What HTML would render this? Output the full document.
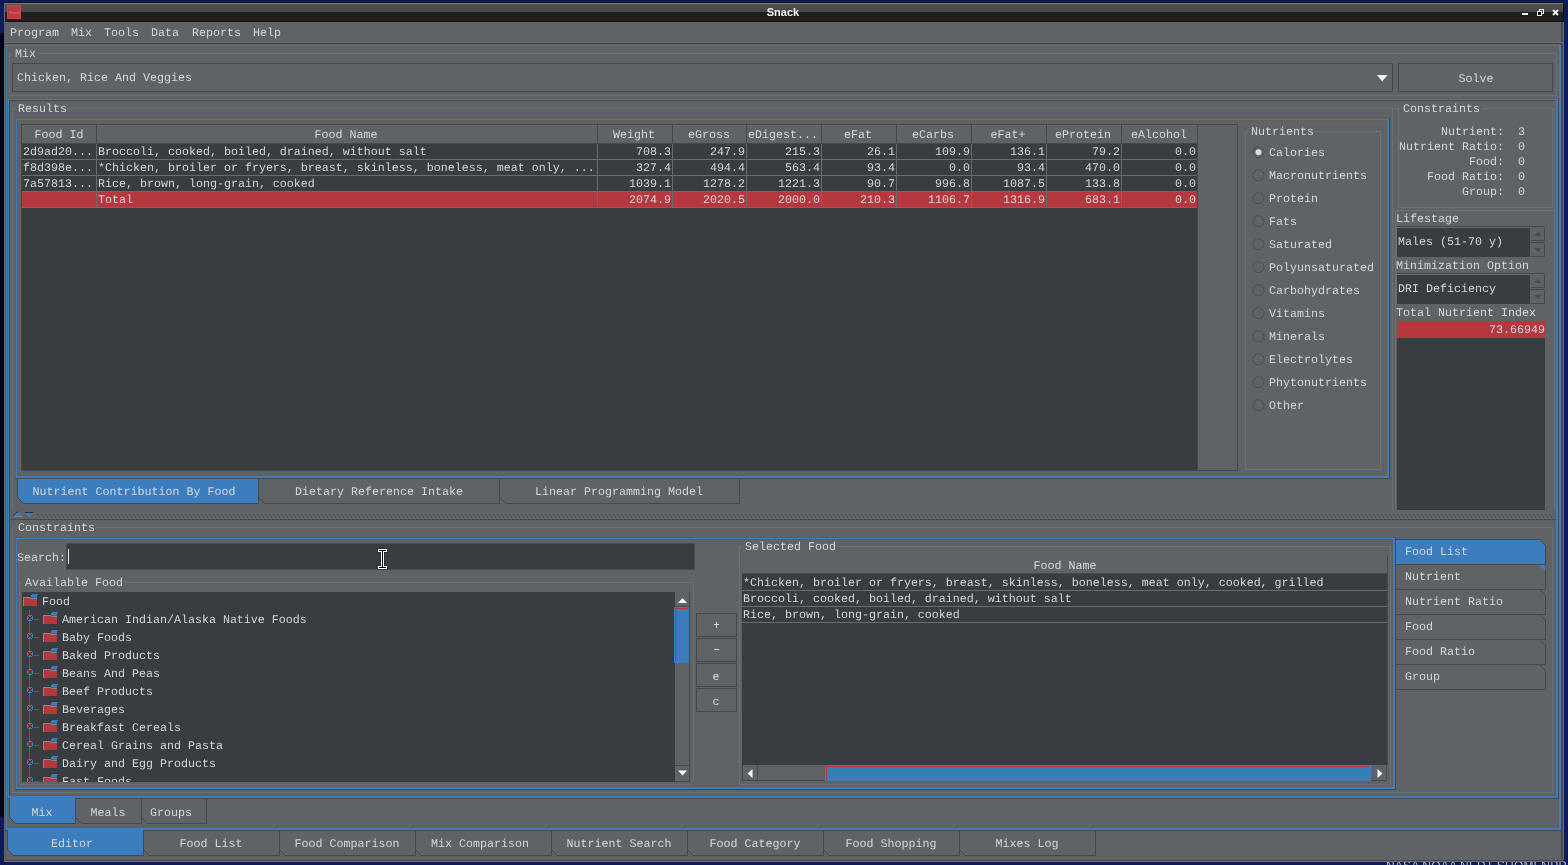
<!DOCTYPE html>
<html><head><meta charset="utf-8"><title>Snack</title><style>
*{margin:0;padding:0;box-sizing:content-box}
html,body{width:1568px;height:865px;overflow:hidden;background:#0c1c58}
#root{position:absolute;left:0;top:0;width:1568px;height:865px;overflow:hidden;will-change:transform;background:#0c1c58}
#root div,#root svg{position:absolute}
.t{font-family:"Liberation Mono",monospace;font-size:11.67px;line-height:14px;white-space:pre;height:14px;text-rendering:geometricPrecision}
</style></head><body><div id="root">
<div style="left:0px;top:0px;width:1568px;height:865px;background:#0c1c58;"></div>
<div style="left:0px;top:33px;width:4px;height:784px;background:#02031c;"></div>
<div style="left:1386px;top:858px;font-family:'Liberation Sans',sans-serif;font-size:12px;line-height:16px;color:#b8bccc;letter-spacing:0.2px;white-space:pre">NASA NOAA NEDT SUOMI-NPP</div>
<div style="left:4px;top:2px;width:1560px;height:860px;background:#121212;"></div>
<div style="left:4px;top:3px;width:1559px;height:1px;background:#7c7c7c;"></div>
<div style="left:4px;top:4px;width:1559px;height:8px;background:linear-gradient(#505050,#464646);"></div>
<div style="left:4px;top:12px;width:1559px;height:9px;background:#1f1f1f;"></div>
<div style="left:4px;top:21px;width:1559px;height:1px;background:#151515;"></div>
<div style="left:4px;top:3px;width:1px;height:19px;background:#6a6a6a;"></div>
<div style="left:7px;top:5px;width:14px;height:14px;background:#bc3b43;box-shadow:inset 0 0 0 1px #cf444c"></div>
<div style="left:9px;top:10px;width:24px;height:10px;transform:scale(0.5);transform-origin:0 0;font-family:'Liberation Sans',sans-serif;font-size:8px;line-height:10px;color:#d07a80">Snack</div>
<div style="left:683px;top:5px;width:200px;text-align:center;font-family:'Liberation Sans',sans-serif;font-weight:bold;font-size:11px;line-height:14px;color:#f4f4f4">Snack</div>
<div style="left:1522px;top:13px;width:6px;height:2px;background:#f2f2f2;"></div>
<svg style="left:1537px;top:9px" width="7" height="7" shape-rendering="crispEdges"><path d="M2.5 2V0.5H6.5V4.5H5" fill="none" stroke="#f2f2f2" stroke-width="1"/><rect x="0.5" y="2.5" width="4" height="4" fill="#000" stroke="#f2f2f2" stroke-width="1"/></svg>
<svg style="left:1552px;top:9px" width="7" height="7"><path d="M1 1L6 6M6 1L1 6" stroke="#f2f2f2" stroke-width="2"/></svg>
<div style="left:4px;top:22px;width:1559px;height:839px;background:#5f6366;"></div>
<div style="left:5px;top:22px;width:1px;height:838px;background:#5e5b59;"></div>
<div style="left:1561px;top:22px;width:1px;height:838px;background:#46494b;"></div>
<div style="left:1562px;top:22px;width:1px;height:838px;background:#46494b;"></div>
<div style="left:1563px;top:22px;width:1px;height:838px;background:#6a6d70;"></div>
<div style="left:6px;top:860px;width:1556px;height:1px;background:#46494b;"></div>
<div style="left:4px;top:861px;width:1560px;height:1px;background:#707272;"></div>
<div style="left:4px;top:22px;width:1px;height:840px;background:#63605e;"></div>
<div style="left:4px;top:42px;width:1559px;height:1px;background:#6b6f72;"></div>
<div style="left:4px;top:43px;width:1559px;height:1px;background:#45474a;"></div>
<div style="left:4px;top:44px;width:1559px;height:1px;background:#4f5153;"></div>
<div class="t" style="left:10px;top:26px;color:#d2d7dd;">Program</div>
<div class="t" style="left:71px;top:26px;color:#d2d7dd;">Mix</div>
<div class="t" style="left:104px;top:26px;color:#d2d7dd;">Tools</div>
<div class="t" style="left:151px;top:26px;color:#d2d7dd;">Data</div>
<div class="t" style="left:192px;top:26px;color:#d2d7dd;">Reports</div>
<div class="t" style="left:253px;top:26px;color:#d2d7dd;">Help</div>
<div style="left:5px;top:44px;width:1556px;height:1px;background:#625e5c;"></div>
<div style="left:5px;top:44px;width:1px;height:786px;background:#625e5c;"></div>
<div style="left:5px;top:830px;width:1557px;height:1px;background:#46494b;"></div>
<div style="left:1561px;top:44px;width:1px;height:787px;background:#46494b;"></div>
<div style="left:6px;top:45px;width:1555px;height:1px;background:#3b7dbd;"></div>
<div style="left:6px;top:45px;width:1px;height:785px;background:#3b7dbd;"></div>
<div style="left:6px;top:828px;width:1555px;height:2px;background:#3b7dbd;"></div>
<div style="left:1559px;top:45px;width:2px;height:785px;background:#3b7dbd;"></div>
<div style="left:7px;top:46px;width:1552px;height:1px;background:#625e5c;"></div>
<div style="left:7px;top:46px;width:1px;height:782px;background:#625e5c;"></div>
<div style="left:7px;top:827px;width:1552px;height:1px;background:#625e5c;"></div>
<div style="left:1558px;top:46px;width:1px;height:782px;background:#625e5c;"></div>
<div style="left:9px;top:53px;width:1546px;height:41px;border:1px solid #6c7075;"></div>
<div style="left:12px;top:52px;width:26px;height:3px;background:#5f6366;"></div>
<div class="t" style="left:15px;top:47px;color:#d2d7dd;">Mix</div>
<div style="left:12px;top:63px;width:1379px;height:27px;border:1px solid #46494b;"></div>
<div class="t" style="left:17px;top:71px;color:#d2d7dd;">Chicken, Rice And Veggies</div>
<svg style="left:1377px;top:75px" width="11" height="7"><polygon points="0,0 10.5,0 5.25,6.5" fill="#f4f4f4"/></svg>
<div style="left:1398px;top:63px;width:153px;height:27px;border:1px solid #46494b;"></div>
<div class="t" style="left:1176px;width:600px;text-align:center;top:72px;color:#d2d7dd;">Solve</div>
<div style="left:7px;top:98px;width:1551px;height:1px;background:#625e5c;"></div>
<div style="left:7px;top:98px;width:1px;height:700px;background:#625e5c;"></div>
<div style="left:7px;top:798px;width:1552px;height:1px;background:#46494b;"></div>
<div style="left:1558px;top:98px;width:1px;height:701px;background:#46494b;"></div>
<div style="left:8px;top:99px;width:1550px;height:1px;background:#3b7dbd;"></div>
<div style="left:8px;top:99px;width:1px;height:699px;background:#3b7dbd;"></div>
<div style="left:8px;top:796px;width:1550px;height:2px;background:#3b7dbd;"></div>
<div style="left:1556px;top:99px;width:2px;height:699px;background:#3b7dbd;"></div>
<div style="left:9px;top:100px;width:1547px;height:1px;background:#46494b;"></div>
<div style="left:9px;top:100px;width:1px;height:696px;background:#46494b;"></div>
<div style="left:9px;top:795px;width:1547px;height:1px;background:#625e5c;"></div>
<div style="left:1555px;top:100px;width:1px;height:696px;background:#625e5c;"></div>
<div style="left:12px;top:108px;width:1541px;height:403px;border:1px solid #6c7075;"></div>
<div style="left:15px;top:107px;width:54px;height:3px;background:#5f6366;"></div>
<div class="t" style="left:18px;top:102px;color:#d2d7dd;">Results</div>
<div style="left:15px;top:118px;width:1374px;height:1px;background:#625e5c;"></div>
<div style="left:15px;top:118px;width:1px;height:360px;background:#625e5c;"></div>
<div style="left:15px;top:478px;width:1375px;height:1px;background:#46494b;"></div>
<div style="left:1389px;top:118px;width:1px;height:361px;background:#46494b;"></div>
<div style="left:16px;top:119px;width:1373px;height:1px;background:#3b7dbd;"></div>
<div style="left:16px;top:119px;width:1px;height:359px;background:#3b7dbd;"></div>
<div style="left:16px;top:476px;width:1373px;height:2px;background:#3b7dbd;"></div>
<div style="left:1387px;top:119px;width:2px;height:359px;background:#3b7dbd;"></div>
<div style="left:17px;top:120px;width:1370px;height:1px;background:#625e5c;"></div>
<div style="left:17px;top:120px;width:1px;height:356px;background:#625e5c;"></div>
<div style="left:17px;top:475px;width:1370px;height:1px;background:#625e5c;"></div>
<div style="left:1386px;top:120px;width:1px;height:356px;background:#625e5c;"></div>
<div style="left:21px;top:124px;width:1215px;height:345px;border:1px solid #46494b;"></div>
<div style="left:22px;top:125px;width:1175px;height:345px;background:#393c40;"></div>
<div style="left:1197px;top:125px;width:40px;height:345px;background:#5f6366;"></div>
<div style="left:22px;top:125px;width:1175px;height:18px;background:#5f6366;"></div>
<div style="left:22px;top:125px;width:1175px;height:1px;background:#676b6e;"></div>
<div style="left:22px;top:143px;width:1175px;height:1px;background:#46494b;"></div>
<div style="left:96px;top:125px;width:1px;height:18px;background:#46494b;"></div>
<div class="t" style="left:-241px;width:600px;text-align:center;top:128px;color:#d2d7dd;">Food Id</div>
<div style="left:597px;top:125px;width:1px;height:18px;background:#46494b;"></div>
<div class="t" style="left:46px;width:600px;text-align:center;top:128px;color:#d2d7dd;">Food Name</div>
<div style="left:672px;top:125px;width:1px;height:18px;background:#46494b;"></div>
<div class="t" style="left:334px;width:600px;text-align:center;top:128px;color:#d2d7dd;">Weight</div>
<div style="left:746px;top:125px;width:1px;height:18px;background:#46494b;"></div>
<div class="t" style="left:409px;width:600px;text-align:center;top:128px;color:#d2d7dd;">eGross</div>
<div style="left:821px;top:125px;width:1px;height:18px;background:#46494b;"></div>
<div class="t" style="left:483px;width:600px;text-align:center;top:128px;color:#d2d7dd;">eDigest...</div>
<div style="left:896px;top:125px;width:1px;height:18px;background:#46494b;"></div>
<div class="t" style="left:558px;width:600px;text-align:center;top:128px;color:#d2d7dd;">eFat</div>
<div style="left:971px;top:125px;width:1px;height:18px;background:#46494b;"></div>
<div class="t" style="left:633px;width:600px;text-align:center;top:128px;color:#d2d7dd;">eCarbs</div>
<div style="left:1046px;top:125px;width:1px;height:18px;background:#46494b;"></div>
<div class="t" style="left:708px;width:600px;text-align:center;top:128px;color:#d2d7dd;">eFat+</div>
<div style="left:1121px;top:125px;width:1px;height:18px;background:#46494b;"></div>
<div class="t" style="left:783px;width:600px;text-align:center;top:128px;color:#d2d7dd;">eProtein</div>
<div style="left:1197px;top:125px;width:1px;height:18px;background:#46494b;"></div>
<div class="t" style="left:859px;width:600px;text-align:center;top:128px;color:#d2d7dd;">eAlcohol</div>
<div style="left:22px;top:159px;width:1175px;height:1px;background:#686c70;"></div>
<div class="t" style="left:23px;top:145px;color:#d2d7dd;">2d9ad20...</div>
<div class="t" style="left:98px;top:145px;color:#d2d7dd;">Broccoli, cooked, boiled, drained, without salt</div>
<div class="t" style="left:71px;width:600px;text-align:right;top:145px;color:#d2d7dd;">708.3</div>
<div class="t" style="left:145px;width:600px;text-align:right;top:145px;color:#d2d7dd;">247.9</div>
<div class="t" style="left:220px;width:600px;text-align:right;top:145px;color:#d2d7dd;">215.3</div>
<div class="t" style="left:295px;width:600px;text-align:right;top:145px;color:#d2d7dd;">26.1</div>
<div class="t" style="left:370px;width:600px;text-align:right;top:145px;color:#d2d7dd;">109.9</div>
<div class="t" style="left:445px;width:600px;text-align:right;top:145px;color:#d2d7dd;">136.1</div>
<div class="t" style="left:520px;width:600px;text-align:right;top:145px;color:#d2d7dd;">79.2</div>
<div class="t" style="left:596px;width:600px;text-align:right;top:145px;color:#d2d7dd;">0.0</div>
<div style="left:22px;top:175px;width:1175px;height:1px;background:#686c70;"></div>
<div class="t" style="left:23px;top:161px;color:#d2d7dd;">f8d398e...</div>
<div class="t" style="left:98px;top:161px;color:#d2d7dd;">*Chicken, broiler or fryers, breast, skinless, boneless, meat only, ...</div>
<div class="t" style="left:71px;width:600px;text-align:right;top:161px;color:#d2d7dd;">327.4</div>
<div class="t" style="left:145px;width:600px;text-align:right;top:161px;color:#d2d7dd;">494.4</div>
<div class="t" style="left:220px;width:600px;text-align:right;top:161px;color:#d2d7dd;">563.4</div>
<div class="t" style="left:295px;width:600px;text-align:right;top:161px;color:#d2d7dd;">93.4</div>
<div class="t" style="left:370px;width:600px;text-align:right;top:161px;color:#d2d7dd;">0.0</div>
<div class="t" style="left:445px;width:600px;text-align:right;top:161px;color:#d2d7dd;">93.4</div>
<div class="t" style="left:520px;width:600px;text-align:right;top:161px;color:#d2d7dd;">470.0</div>
<div class="t" style="left:596px;width:600px;text-align:right;top:161px;color:#d2d7dd;">0.0</div>
<div style="left:22px;top:191px;width:1175px;height:1px;background:#686c70;"></div>
<div class="t" style="left:23px;top:177px;color:#d2d7dd;">7a57813...</div>
<div class="t" style="left:98px;top:177px;color:#d2d7dd;">Rice, brown, long-grain, cooked</div>
<div class="t" style="left:71px;width:600px;text-align:right;top:177px;color:#d2d7dd;">1039.1</div>
<div class="t" style="left:145px;width:600px;text-align:right;top:177px;color:#d2d7dd;">1278.2</div>
<div class="t" style="left:220px;width:600px;text-align:right;top:177px;color:#d2d7dd;">1221.3</div>
<div class="t" style="left:295px;width:600px;text-align:right;top:177px;color:#d2d7dd;">90.7</div>
<div class="t" style="left:370px;width:600px;text-align:right;top:177px;color:#d2d7dd;">996.8</div>
<div class="t" style="left:445px;width:600px;text-align:right;top:177px;color:#d2d7dd;">1087.5</div>
<div class="t" style="left:520px;width:600px;text-align:right;top:177px;color:#d2d7dd;">133.8</div>
<div class="t" style="left:596px;width:600px;text-align:right;top:177px;color:#d2d7dd;">0.0</div>
<div style="left:22px;top:192px;width:1175px;height:15px;background:#b6373e;"></div>
<div style="left:22px;top:207px;width:1175px;height:1px;background:#686c70;"></div>
<div class="t" style="left:23px;top:193px;color:#d2d7dd;"></div>
<div class="t" style="left:98px;top:193px;color:#d2d7dd;">Total</div>
<div class="t" style="left:71px;width:600px;text-align:right;top:193px;color:#d2d7dd;">2074.9</div>
<div class="t" style="left:145px;width:600px;text-align:right;top:193px;color:#d2d7dd;">2020.5</div>
<div class="t" style="left:220px;width:600px;text-align:right;top:193px;color:#d2d7dd;">2000.0</div>
<div class="t" style="left:295px;width:600px;text-align:right;top:193px;color:#d2d7dd;">210.3</div>
<div class="t" style="left:370px;width:600px;text-align:right;top:193px;color:#d2d7dd;">1106.7</div>
<div class="t" style="left:445px;width:600px;text-align:right;top:193px;color:#d2d7dd;">1316.9</div>
<div class="t" style="left:520px;width:600px;text-align:right;top:193px;color:#d2d7dd;">683.1</div>
<div class="t" style="left:596px;width:600px;text-align:right;top:193px;color:#d2d7dd;">0.0</div>
<div style="left:96px;top:144px;width:1px;height:63px;background:#686c70;"></div>
<div style="left:597px;top:144px;width:1px;height:63px;background:#686c70;"></div>
<div style="left:672px;top:144px;width:1px;height:63px;background:#686c70;"></div>
<div style="left:746px;top:144px;width:1px;height:63px;background:#686c70;"></div>
<div style="left:821px;top:144px;width:1px;height:63px;background:#686c70;"></div>
<div style="left:896px;top:144px;width:1px;height:63px;background:#686c70;"></div>
<div style="left:971px;top:144px;width:1px;height:63px;background:#686c70;"></div>
<div style="left:1046px;top:144px;width:1px;height:63px;background:#686c70;"></div>
<div style="left:1121px;top:144px;width:1px;height:63px;background:#686c70;"></div>
<div style="left:1197px;top:125px;width:1px;height:346px;background:#46494b;"></div>
<div style="left:1245px;top:131px;width:134px;height:337px;border:1px solid #6c7075;"></div>
<div style="left:1248px;top:130px;width:68px;height:3px;background:#5f6366;"></div>
<div class="t" style="left:1251px;top:125px;color:#d2d7dd;">Nutrients</div>
<svg style="left:1252px;top:146px" width="13" height="13"><circle cx="6.5" cy="6.2" r="5.5" fill="none" stroke="#4b4e51" stroke-width="1"/><circle cx="6.5" cy="6.2" r="3" fill="#d8dde2"/></svg>
<div class="t" style="left:1269px;top:146px;color:#d2d7dd;">Calories</div>
<svg style="left:1252px;top:169px" width="13" height="13"><circle cx="6.5" cy="6.2" r="5.5" fill="none" stroke="#4b4e51" stroke-width="1"/></svg>
<div class="t" style="left:1269px;top:169px;color:#d2d7dd;">Macronutrients</div>
<svg style="left:1252px;top:192px" width="13" height="13"><circle cx="6.5" cy="6.2" r="5.5" fill="none" stroke="#4b4e51" stroke-width="1"/></svg>
<div class="t" style="left:1269px;top:192px;color:#d2d7dd;">Protein</div>
<svg style="left:1252px;top:215px" width="13" height="13"><circle cx="6.5" cy="6.2" r="5.5" fill="none" stroke="#4b4e51" stroke-width="1"/></svg>
<div class="t" style="left:1269px;top:215px;color:#d2d7dd;">Fats</div>
<svg style="left:1252px;top:238px" width="13" height="13"><circle cx="6.5" cy="6.2" r="5.5" fill="none" stroke="#4b4e51" stroke-width="1"/></svg>
<div class="t" style="left:1269px;top:238px;color:#d2d7dd;">Saturated</div>
<svg style="left:1252px;top:261px" width="13" height="13"><circle cx="6.5" cy="6.2" r="5.5" fill="none" stroke="#4b4e51" stroke-width="1"/></svg>
<div class="t" style="left:1269px;top:261px;color:#d2d7dd;">Polyunsaturated</div>
<svg style="left:1252px;top:284px" width="13" height="13"><circle cx="6.5" cy="6.2" r="5.5" fill="none" stroke="#4b4e51" stroke-width="1"/></svg>
<div class="t" style="left:1269px;top:284px;color:#d2d7dd;">Carbohydrates</div>
<svg style="left:1252px;top:307px" width="13" height="13"><circle cx="6.5" cy="6.2" r="5.5" fill="none" stroke="#4b4e51" stroke-width="1"/></svg>
<div class="t" style="left:1269px;top:307px;color:#d2d7dd;">Vitamins</div>
<svg style="left:1252px;top:330px" width="13" height="13"><circle cx="6.5" cy="6.2" r="5.5" fill="none" stroke="#4b4e51" stroke-width="1"/></svg>
<div class="t" style="left:1269px;top:330px;color:#d2d7dd;">Minerals</div>
<svg style="left:1252px;top:353px" width="13" height="13"><circle cx="6.5" cy="6.2" r="5.5" fill="none" stroke="#4b4e51" stroke-width="1"/></svg>
<div class="t" style="left:1269px;top:353px;color:#d2d7dd;">Electrolytes</div>
<svg style="left:1252px;top:376px" width="13" height="13"><circle cx="6.5" cy="6.2" r="5.5" fill="none" stroke="#4b4e51" stroke-width="1"/></svg>
<div class="t" style="left:1269px;top:376px;color:#d2d7dd;">Phytonutrients</div>
<svg style="left:1252px;top:399px" width="13" height="13"><circle cx="6.5" cy="6.2" r="5.5" fill="none" stroke="#4b4e51" stroke-width="1"/></svg>
<div class="t" style="left:1269px;top:399px;color:#d2d7dd;">Other</div>
<svg style="left:17px;top:478px" width="242" height="26" shape-rendering="crispEdges"><polygon points="0.5,0 0.5,19.5 6.5,25.5 241.5,25.5 241.5,0" fill="#3b7dbd" stroke="#46494b" stroke-width="1"/></svg>
<div class="t" style="left:-166px;width:600px;text-align:center;top:485px;color:#d2d7dd;">Nutrient Contribution By Food</div>
<svg style="left:258px;top:478px" width="242" height="26" shape-rendering="crispEdges"><polygon points="0.5,0 0.5,19.5 6.5,25.5 241.5,25.5 241.5,0" fill="#5f6366" stroke="#46494b" stroke-width="1"/></svg>
<div class="t" style="left:79px;width:600px;text-align:center;top:485px;color:#d2d7dd;">Dietary Reference Intake</div>
<svg style="left:499px;top:478px" width="241" height="26" shape-rendering="crispEdges"><polygon points="0.5,0 0.5,19.5 6.5,25.5 240.5,25.5 240.5,0" fill="#5f6366" stroke="#46494b" stroke-width="1"/></svg>
<div class="t" style="left:319px;width:600px;text-align:center;top:485px;color:#d2d7dd;">Linear Programming Model</div>
<div style="left:16px;top:478px;width:1374px;height:1px;background:#46494b;"></div>
<div style="left:1392px;top:108px;width:1px;height:402px;background:#6c7075;"></div>
<div style="left:1398px;top:108px;width:153px;height:98px;border:1px solid #6c7075;"></div>
<div style="left:1400px;top:107px;width:82px;height:3px;background:#5f6366;"></div>
<div class="t" style="left:1403px;top:102px;color:#d2d7dd;">Constraints</div>
<div class="t" style="left:904px;width:600px;text-align:right;top:125px;color:#d2d7dd;">Nutrient:</div>
<div class="t" style="left:1518px;top:125px;color:#d2d7dd;">3</div>
<div class="t" style="left:904px;width:600px;text-align:right;top:140px;color:#d2d7dd;">Nutrient Ratio:</div>
<div class="t" style="left:1518px;top:140px;color:#d2d7dd;">0</div>
<div class="t" style="left:904px;width:600px;text-align:right;top:155px;color:#d2d7dd;">Food:</div>
<div class="t" style="left:1518px;top:155px;color:#d2d7dd;">0</div>
<div class="t" style="left:904px;width:600px;text-align:right;top:170px;color:#d2d7dd;">Food Ratio:</div>
<div class="t" style="left:1518px;top:170px;color:#d2d7dd;">0</div>
<div class="t" style="left:904px;width:600px;text-align:right;top:185px;color:#d2d7dd;">Group:</div>
<div class="t" style="left:1518px;top:185px;color:#d2d7dd;">0</div>
<div style="left:1395px;top:210px;width:158px;height:301px;border:1px solid #6c7075;"></div>
<div class="t" style="left:1396px;top:212px;color:#d2d7dd;">Lifestage</div>
<div style="left:1396px;top:226px;width:149px;height:1px;background:#46494b;"></div>
<div style="left:1396px;top:227px;width:134px;height:1px;background:#6a6e71;"></div>
<div style="left:1396px;top:226px;width:1px;height:31px;background:#6a6e71;"></div>
<div style="left:1397px;top:228px;width:133px;height:29px;background:#393c40;"></div>
<div class="t" style="left:1398px;top:235px;color:#d2d7dd;">Males (51-70 y)</div>
<div style="left:1544px;top:228px;width:1px;height:13px;background:#46494b;"></div>
<div style="left:1531px;top:240px;width:14px;height:1px;background:#46494b;"></div>
<div style="left:1530px;top:242px;width:15px;height:1px;background:#46494b;"></div>
<div style="left:1544px;top:244px;width:1px;height:13px;background:#46494b;"></div>
<div style="left:1531px;top:256px;width:14px;height:1px;background:#46494b;"></div>
<svg style="left:1533px;top:231px" width="10" height="22"><polygon points="1,5 9,5 5,1" fill="#4a4d50"/><polygon points="1,17 9,17 5,21" fill="#4a4d50"/></svg>
<div class="t" style="left:1396px;top:259px;color:#d2d7dd;">Minimization Option</div>
<div style="left:1396px;top:273px;width:149px;height:1px;background:#46494b;"></div>
<div style="left:1396px;top:274px;width:134px;height:1px;background:#6a6e71;"></div>
<div style="left:1396px;top:273px;width:1px;height:31px;background:#6a6e71;"></div>
<div style="left:1397px;top:275px;width:133px;height:29px;background:#393c40;"></div>
<div class="t" style="left:1398px;top:282px;color:#d2d7dd;">DRI Deficiency</div>
<div style="left:1544px;top:275px;width:1px;height:13px;background:#46494b;"></div>
<div style="left:1531px;top:287px;width:14px;height:1px;background:#46494b;"></div>
<div style="left:1530px;top:289px;width:15px;height:1px;background:#46494b;"></div>
<div style="left:1544px;top:291px;width:1px;height:13px;background:#46494b;"></div>
<div style="left:1531px;top:303px;width:14px;height:1px;background:#46494b;"></div>
<svg style="left:1533px;top:278px" width="10" height="22"><polygon points="1,5 9,5 5,1" fill="#4a4d50"/><polygon points="1,17 9,17 5,21" fill="#4a4d50"/></svg>
<div class="t" style="left:1396px;top:306px;color:#d2d7dd;">Total Nutrient Index</div>
<div style="left:1397px;top:321px;width:148px;height:189px;background:#393c40;"></div>
<div style="left:1397px;top:321px;width:148px;height:17px;background:#b6373e;"></div>
<div class="t" style="left:945px;width:600px;text-align:right;top:323px;color:#d2d7dd;">73.66949</div>
<div style="left:10px;top:510px;width:1545px;height:9px;background:#5f6366;"></div>
<svg style="left:37px;top:514px" width="1517" height="3" shape-rendering="crispEdges"><defs><pattern id="dv" width="4" height="3" patternUnits="userSpaceOnUse"><rect x="0" y="0" width="1" height="1" fill="#45484b"/><rect x="2" y="2" width="1" height="1" fill="#45484b"/></pattern></defs><rect width="1517" height="3" fill="url(#dv)"/></svg>
<svg style="left:12px;top:511px" width="24" height="7"><polygon points="4.5,1 6.5,1 10.5,5.5 1,5.5" fill="#3b7dbd"/><path d="M1 5.5L4.5 1.2H6.5" fill="none" stroke="#2e3033" stroke-width="1"/><rect x="2" y="5" width="8.5" height="1" fill="#8a8c8e" opacity="0.6"/><rect x="13" y="1" width="8" height="1" fill="#2e3033"/><polygon points="13,2 21,2 17.5,6 16.5,6" fill="#3b7dbd"/></svg>
<div style="left:9px;top:519px;width:1547px;height:1px;background:#46494b;"></div>
<div style="left:12px;top:527px;width:1539px;height:264px;border:1px solid #6c7075;"></div>
<div style="left:15px;top:526px;width:82px;height:3px;background:#5f6366;"></div>
<div class="t" style="left:18px;top:521px;color:#d2d7dd;">Constraints</div>
<div style="left:15px;top:537px;width:1380px;height:1px;background:#625e5c;"></div>
<div style="left:15px;top:537px;width:1px;height:252px;background:#625e5c;"></div>
<div style="left:15px;top:789px;width:1381px;height:1px;background:#46494b;"></div>
<div style="left:1395px;top:537px;width:1px;height:253px;background:#46494b;"></div>
<div style="left:16px;top:538px;width:1379px;height:1px;background:#3b7dbd;"></div>
<div style="left:16px;top:538px;width:1px;height:251px;background:#3b7dbd;"></div>
<div style="left:16px;top:787px;width:1379px;height:2px;background:#3b7dbd;"></div>
<div style="left:1393px;top:538px;width:2px;height:251px;background:#3b7dbd;"></div>
<div style="left:17px;top:539px;width:1376px;height:1px;background:#625e5c;"></div>
<div style="left:17px;top:539px;width:1px;height:248px;background:#625e5c;"></div>
<div style="left:17px;top:786px;width:1376px;height:1px;background:#625e5c;"></div>
<div style="left:1392px;top:539px;width:1px;height:248px;background:#625e5c;"></div>
<div class="t" style="left:17px;top:551px;color:#d2d7dd;">Search:</div>
<div style="left:66px;top:543px;width:627px;height:25px;border:1px solid #4a4d50;"></div>
<div style="left:67px;top:544px;width:627px;height:25px;background:#393c40;"></div>
<div style="left:68px;top:549px;width:1px;height:15px;background:#e8e8e8;"></div>
<svg style="left:377px;top:548px" width="11" height="22" shape-rendering="crispEdges"><rect x="0" y="0" width="11" height="5" fill="#222" opacity="0.5"/><rect x="0" y="17" width="11" height="5" fill="#222" opacity="0.5"/><rect x="3" y="4" width="5" height="14" fill="#222" opacity="0.5"/><rect x="1" y="1" width="9" height="3" fill="#fff"/><rect x="1" y="18" width="9" height="3" fill="#fff"/><rect x="4" y="3" width="3" height="16" fill="#fff"/><rect x="2" y="2" width="7" height="1" fill="#000"/><rect x="2" y="19" width="7" height="1" fill="#000"/><rect x="5" y="2" width="1" height="18" fill="#000"/></svg>
<div style="left:19px;top:582px;width:673px;height:201px;border:1px solid #6c7075;"></div>
<div style="left:22px;top:581px;width:103px;height:3px;background:#5f6366;"></div>
<div class="t" style="left:25px;top:576px;color:#d2d7dd;">Available Food</div>
<div style="left:22px;top:592px;width:653px;height:190px;background:#393c40;"></div>
<svg style="left:23px;top:594px" width="15" height="12" shape-rendering="crispEdges"><rect x="0" y="3" width="14" height="9" fill="#b6373e"/><rect x="0" y="3" width="8" height="1" fill="#84888a"/><rect x="8" y="4" width="6" height="1" fill="#84888a"/><rect x="0" y="3" width="1" height="9" fill="#84888a"/><polygon points="8,3 9,0 15,0 14,3" fill="#3b7dbd"/></svg>
<div class="t" style="left:42px;top:595px;color:#d2d7dd;">Food</div>
<svg style="left:22px;top:592px" width="653" height="190" shape-rendering="crispEdges"><rect x="7" y="18" width="1" height="172" fill="#b6373e"/><rect x="12" y="27" width="5" height="1" fill="#b6373e"/><rect x="12" y="45" width="5" height="1" fill="#b6373e"/><rect x="12" y="63" width="5" height="1" fill="#b6373e"/><rect x="12" y="81" width="5" height="1" fill="#b6373e"/><rect x="12" y="99" width="5" height="1" fill="#b6373e"/><rect x="12" y="117" width="5" height="1" fill="#b6373e"/><rect x="12" y="135" width="5" height="1" fill="#b6373e"/><rect x="12" y="153" width="5" height="1" fill="#b6373e"/><rect x="12" y="171" width="5" height="1" fill="#b6373e"/><rect x="12" y="189" width="5" height="1" fill="#b6373e"/></svg>
<svg style="left:27px;top:615px" width="6" height="6" shape-rendering="crispEdges"><rect x="0" y="0" width="6" height="6" fill="#383b3e"/><rect x="1" y="0" width="4" height="1" fill="#3b7dbd"/><rect x="1" y="5" width="4" height="1" fill="#3b7dbd"/><rect x="0" y="1" width="1" height="4" fill="#3b7dbd"/><rect x="5" y="1" width="1" height="4" fill="#3b7dbd"/><rect x="2" y="1" width="2" height="1" fill="#b6373e"/><rect x="2" y="4" width="2" height="1" fill="#b6373e"/><rect x="1" y="2" width="1" height="2" fill="#b6373e"/><rect x="4" y="2" width="1" height="2" fill="#b6373e"/></svg>
<svg style="left:43px;top:612px" width="15" height="12" shape-rendering="crispEdges"><rect x="0" y="3" width="14" height="9" fill="#b6373e"/><rect x="0" y="3" width="8" height="1" fill="#84888a"/><rect x="8" y="4" width="6" height="1" fill="#84888a"/><rect x="0" y="3" width="1" height="9" fill="#84888a"/><polygon points="8,3 9,0 15,0 14,3" fill="#3b7dbd"/></svg>
<div class="t" style="left:62px;top:613px;color:#d2d7dd;">American Indian/Alaska Native Foods</div>
<svg style="left:27px;top:633px" width="6" height="6" shape-rendering="crispEdges"><rect x="0" y="0" width="6" height="6" fill="#383b3e"/><rect x="1" y="0" width="4" height="1" fill="#3b7dbd"/><rect x="1" y="5" width="4" height="1" fill="#3b7dbd"/><rect x="0" y="1" width="1" height="4" fill="#3b7dbd"/><rect x="5" y="1" width="1" height="4" fill="#3b7dbd"/><rect x="2" y="1" width="2" height="1" fill="#b6373e"/><rect x="2" y="4" width="2" height="1" fill="#b6373e"/><rect x="1" y="2" width="1" height="2" fill="#b6373e"/><rect x="4" y="2" width="1" height="2" fill="#b6373e"/></svg>
<svg style="left:43px;top:630px" width="15" height="12" shape-rendering="crispEdges"><rect x="0" y="3" width="14" height="9" fill="#b6373e"/><rect x="0" y="3" width="8" height="1" fill="#84888a"/><rect x="8" y="4" width="6" height="1" fill="#84888a"/><rect x="0" y="3" width="1" height="9" fill="#84888a"/><polygon points="8,3 9,0 15,0 14,3" fill="#3b7dbd"/></svg>
<div class="t" style="left:62px;top:631px;color:#d2d7dd;">Baby Foods</div>
<svg style="left:27px;top:651px" width="6" height="6" shape-rendering="crispEdges"><rect x="0" y="0" width="6" height="6" fill="#383b3e"/><rect x="1" y="0" width="4" height="1" fill="#3b7dbd"/><rect x="1" y="5" width="4" height="1" fill="#3b7dbd"/><rect x="0" y="1" width="1" height="4" fill="#3b7dbd"/><rect x="5" y="1" width="1" height="4" fill="#3b7dbd"/><rect x="2" y="1" width="2" height="1" fill="#b6373e"/><rect x="2" y="4" width="2" height="1" fill="#b6373e"/><rect x="1" y="2" width="1" height="2" fill="#b6373e"/><rect x="4" y="2" width="1" height="2" fill="#b6373e"/></svg>
<svg style="left:43px;top:648px" width="15" height="12" shape-rendering="crispEdges"><rect x="0" y="3" width="14" height="9" fill="#b6373e"/><rect x="0" y="3" width="8" height="1" fill="#84888a"/><rect x="8" y="4" width="6" height="1" fill="#84888a"/><rect x="0" y="3" width="1" height="9" fill="#84888a"/><polygon points="8,3 9,0 15,0 14,3" fill="#3b7dbd"/></svg>
<div class="t" style="left:62px;top:649px;color:#d2d7dd;">Baked Products</div>
<svg style="left:27px;top:669px" width="6" height="6" shape-rendering="crispEdges"><rect x="0" y="0" width="6" height="6" fill="#383b3e"/><rect x="1" y="0" width="4" height="1" fill="#3b7dbd"/><rect x="1" y="5" width="4" height="1" fill="#3b7dbd"/><rect x="0" y="1" width="1" height="4" fill="#3b7dbd"/><rect x="5" y="1" width="1" height="4" fill="#3b7dbd"/><rect x="2" y="1" width="2" height="1" fill="#b6373e"/><rect x="2" y="4" width="2" height="1" fill="#b6373e"/><rect x="1" y="2" width="1" height="2" fill="#b6373e"/><rect x="4" y="2" width="1" height="2" fill="#b6373e"/></svg>
<svg style="left:43px;top:666px" width="15" height="12" shape-rendering="crispEdges"><rect x="0" y="3" width="14" height="9" fill="#b6373e"/><rect x="0" y="3" width="8" height="1" fill="#84888a"/><rect x="8" y="4" width="6" height="1" fill="#84888a"/><rect x="0" y="3" width="1" height="9" fill="#84888a"/><polygon points="8,3 9,0 15,0 14,3" fill="#3b7dbd"/></svg>
<div class="t" style="left:62px;top:667px;color:#d2d7dd;">Beans And Peas</div>
<svg style="left:27px;top:687px" width="6" height="6" shape-rendering="crispEdges"><rect x="0" y="0" width="6" height="6" fill="#383b3e"/><rect x="1" y="0" width="4" height="1" fill="#3b7dbd"/><rect x="1" y="5" width="4" height="1" fill="#3b7dbd"/><rect x="0" y="1" width="1" height="4" fill="#3b7dbd"/><rect x="5" y="1" width="1" height="4" fill="#3b7dbd"/><rect x="2" y="1" width="2" height="1" fill="#b6373e"/><rect x="2" y="4" width="2" height="1" fill="#b6373e"/><rect x="1" y="2" width="1" height="2" fill="#b6373e"/><rect x="4" y="2" width="1" height="2" fill="#b6373e"/></svg>
<svg style="left:43px;top:684px" width="15" height="12" shape-rendering="crispEdges"><rect x="0" y="3" width="14" height="9" fill="#b6373e"/><rect x="0" y="3" width="8" height="1" fill="#84888a"/><rect x="8" y="4" width="6" height="1" fill="#84888a"/><rect x="0" y="3" width="1" height="9" fill="#84888a"/><polygon points="8,3 9,0 15,0 14,3" fill="#3b7dbd"/></svg>
<div class="t" style="left:62px;top:685px;color:#d2d7dd;">Beef Products</div>
<svg style="left:27px;top:705px" width="6" height="6" shape-rendering="crispEdges"><rect x="0" y="0" width="6" height="6" fill="#383b3e"/><rect x="1" y="0" width="4" height="1" fill="#3b7dbd"/><rect x="1" y="5" width="4" height="1" fill="#3b7dbd"/><rect x="0" y="1" width="1" height="4" fill="#3b7dbd"/><rect x="5" y="1" width="1" height="4" fill="#3b7dbd"/><rect x="2" y="1" width="2" height="1" fill="#b6373e"/><rect x="2" y="4" width="2" height="1" fill="#b6373e"/><rect x="1" y="2" width="1" height="2" fill="#b6373e"/><rect x="4" y="2" width="1" height="2" fill="#b6373e"/></svg>
<svg style="left:43px;top:702px" width="15" height="12" shape-rendering="crispEdges"><rect x="0" y="3" width="14" height="9" fill="#b6373e"/><rect x="0" y="3" width="8" height="1" fill="#84888a"/><rect x="8" y="4" width="6" height="1" fill="#84888a"/><rect x="0" y="3" width="1" height="9" fill="#84888a"/><polygon points="8,3 9,0 15,0 14,3" fill="#3b7dbd"/></svg>
<div class="t" style="left:62px;top:703px;color:#d2d7dd;">Beverages</div>
<svg style="left:27px;top:723px" width="6" height="6" shape-rendering="crispEdges"><rect x="0" y="0" width="6" height="6" fill="#383b3e"/><rect x="1" y="0" width="4" height="1" fill="#3b7dbd"/><rect x="1" y="5" width="4" height="1" fill="#3b7dbd"/><rect x="0" y="1" width="1" height="4" fill="#3b7dbd"/><rect x="5" y="1" width="1" height="4" fill="#3b7dbd"/><rect x="2" y="1" width="2" height="1" fill="#b6373e"/><rect x="2" y="4" width="2" height="1" fill="#b6373e"/><rect x="1" y="2" width="1" height="2" fill="#b6373e"/><rect x="4" y="2" width="1" height="2" fill="#b6373e"/></svg>
<svg style="left:43px;top:720px" width="15" height="12" shape-rendering="crispEdges"><rect x="0" y="3" width="14" height="9" fill="#b6373e"/><rect x="0" y="3" width="8" height="1" fill="#84888a"/><rect x="8" y="4" width="6" height="1" fill="#84888a"/><rect x="0" y="3" width="1" height="9" fill="#84888a"/><polygon points="8,3 9,0 15,0 14,3" fill="#3b7dbd"/></svg>
<div class="t" style="left:62px;top:721px;color:#d2d7dd;">Breakfast Cereals</div>
<svg style="left:27px;top:741px" width="6" height="6" shape-rendering="crispEdges"><rect x="0" y="0" width="6" height="6" fill="#383b3e"/><rect x="1" y="0" width="4" height="1" fill="#3b7dbd"/><rect x="1" y="5" width="4" height="1" fill="#3b7dbd"/><rect x="0" y="1" width="1" height="4" fill="#3b7dbd"/><rect x="5" y="1" width="1" height="4" fill="#3b7dbd"/><rect x="2" y="1" width="2" height="1" fill="#b6373e"/><rect x="2" y="4" width="2" height="1" fill="#b6373e"/><rect x="1" y="2" width="1" height="2" fill="#b6373e"/><rect x="4" y="2" width="1" height="2" fill="#b6373e"/></svg>
<svg style="left:43px;top:738px" width="15" height="12" shape-rendering="crispEdges"><rect x="0" y="3" width="14" height="9" fill="#b6373e"/><rect x="0" y="3" width="8" height="1" fill="#84888a"/><rect x="8" y="4" width="6" height="1" fill="#84888a"/><rect x="0" y="3" width="1" height="9" fill="#84888a"/><polygon points="8,3 9,0 15,0 14,3" fill="#3b7dbd"/></svg>
<div class="t" style="left:62px;top:739px;color:#d2d7dd;">Cereal Grains and Pasta</div>
<svg style="left:27px;top:759px" width="6" height="6" shape-rendering="crispEdges"><rect x="0" y="0" width="6" height="6" fill="#383b3e"/><rect x="1" y="0" width="4" height="1" fill="#3b7dbd"/><rect x="1" y="5" width="4" height="1" fill="#3b7dbd"/><rect x="0" y="1" width="1" height="4" fill="#3b7dbd"/><rect x="5" y="1" width="1" height="4" fill="#3b7dbd"/><rect x="2" y="1" width="2" height="1" fill="#b6373e"/><rect x="2" y="4" width="2" height="1" fill="#b6373e"/><rect x="1" y="2" width="1" height="2" fill="#b6373e"/><rect x="4" y="2" width="1" height="2" fill="#b6373e"/></svg>
<svg style="left:43px;top:756px" width="15" height="12" shape-rendering="crispEdges"><rect x="0" y="3" width="14" height="9" fill="#b6373e"/><rect x="0" y="3" width="8" height="1" fill="#84888a"/><rect x="8" y="4" width="6" height="1" fill="#84888a"/><rect x="0" y="3" width="1" height="9" fill="#84888a"/><polygon points="8,3 9,0 15,0 14,3" fill="#3b7dbd"/></svg>
<div class="t" style="left:62px;top:757px;color:#d2d7dd;">Dairy and Egg Products</div>
<svg style="left:27px;top:777px" width="6" height="6" shape-rendering="crispEdges"><rect x="0" y="0" width="6" height="6" fill="#383b3e"/><rect x="1" y="0" width="4" height="1" fill="#3b7dbd"/><rect x="1" y="5" width="4" height="1" fill="#3b7dbd"/><rect x="0" y="1" width="1" height="4" fill="#3b7dbd"/><rect x="5" y="1" width="1" height="4" fill="#3b7dbd"/><rect x="2" y="1" width="2" height="1" fill="#b6373e"/><rect x="2" y="4" width="2" height="1" fill="#b6373e"/><rect x="1" y="2" width="1" height="2" fill="#b6373e"/><rect x="4" y="2" width="1" height="2" fill="#b6373e"/></svg>
<svg style="left:43px;top:774px" width="15" height="12" shape-rendering="crispEdges"><rect x="0" y="3" width="14" height="9" fill="#b6373e"/><rect x="0" y="3" width="8" height="1" fill="#84888a"/><rect x="8" y="4" width="6" height="1" fill="#84888a"/><rect x="0" y="3" width="1" height="9" fill="#84888a"/><polygon points="8,3 9,0 15,0 14,3" fill="#3b7dbd"/></svg>
<div class="t" style="left:62px;top:775px;color:#d2d7dd;">Fast Foods</div>
<div style="left:19px;top:782px;width:676px;height:4px;background:#5f6366;"></div>
<div style="left:19px;top:784px;width:675px;height:1px;background:#6c7075;"></div>
<div style="left:675px;top:592px;width:15px;height:190px;background:#5f6366;"></div>
<div style="left:675px;top:606px;width:15px;height:1px;background:#46494b;"></div>
<div style="left:689px;top:592px;width:1px;height:15px;background:#46494b;"></div>
<svg style="left:678px;top:597px" width="10" height="7"><polygon points="0,6 9,6 4.5,1" fill="#f4f4f4"/></svg>
<svg style="left:674px;top:607px" width="16" height="56" shape-rendering="crispEdges"><defs><pattern id="p1" width="4" height="4" patternUnits="userSpaceOnUse" x="3" y="4"><rect x="0" y="0" width="1" height="1" fill="#c23a44"/><rect x="2" y="2" width="1" height="1" fill="#c23a44"/></pattern></defs><rect width="16" height="56" fill="#3b7dbd"/><rect x="1" y="1" width="13" height="1" fill="#b6373e"/><rect x="1" y="1" width="1" height="54" fill="#b6373e"/><rect x="3" y="4" width="9" height="50" fill="url(#p1)"/></svg>
<div style="left:675px;top:765px;width:15px;height:1px;background:#46494b;"></div>
<div style="left:689px;top:765px;width:1px;height:17px;background:#46494b;"></div>
<div style="left:675px;top:781px;width:15px;height:1px;background:#46494b;"></div>
<svg style="left:678px;top:770px" width="10" height="7"><polygon points="0,0.5 9,0.5 4.5,5.5" fill="#f4f4f4"/></svg>
<div style="left:689px;top:607px;width:1px;height:158px;background:#46494b;"></div>
<div style="left:696px;top:613px;width:39px;height:22px;border:1px solid #46494b;"></div>
<div style="left:716px;top:622px;width:1px;height:6px;background:#d2d7dd;"></div>
<div style="left:714px;top:624px;width:5px;height:1px;background:#d2d7dd;"></div>
<div style="left:696px;top:638px;width:39px;height:22px;border:1px solid #46494b;"></div>
<div style="left:714px;top:649px;width:5px;height:1px;background:#d2d7dd;"></div>
<div style="left:696px;top:663px;width:39px;height:22px;border:1px solid #46494b;"></div>
<div class="t" style="left:416px;width:600px;text-align:center;top:670px;color:#d2d7dd;">e</div>
<div style="left:696px;top:688px;width:39px;height:22px;border:1px solid #46494b;"></div>
<div class="t" style="left:416px;width:600px;text-align:center;top:695px;color:#d2d7dd;">c</div>
<div style="left:739px;top:546px;width:650px;height:237px;border:1px solid #6c7075;"></div>
<div style="left:742px;top:545px;width:96px;height:3px;background:#5f6366;"></div>
<div class="t" style="left:745px;top:540px;color:#d2d7dd;">Selected Food</div>
<div class="t" style="left:765px;width:600px;text-align:center;top:559px;color:#d2d7dd;">Food Name</div>
<div style="left:1387px;top:556px;width:1px;height:17px;background:#46494b;"></div>
<div style="left:742px;top:573px;width:646px;height:1px;background:#46494b;"></div>
<div style="left:742px;top:574px;width:646px;height:191px;background:#393c40;"></div>
<div style="left:742px;top:590px;width:645px;height:1px;background:#686c70;"></div>
<div class="t" style="left:743px;top:576px;color:#d2d7dd;">*Chicken, broiler or fryers, breast, skinless, boneless, meat only, cooked, grilled</div>
<div style="left:742px;top:606px;width:645px;height:1px;background:#686c70;"></div>
<div class="t" style="left:743px;top:592px;color:#d2d7dd;">Broccoli, cooked, boiled, drained, without salt</div>
<div style="left:742px;top:622px;width:645px;height:1px;background:#686c70;"></div>
<div class="t" style="left:743px;top:608px;color:#d2d7dd;">Rice, brown, long-grain, cooked</div>
<div style="left:1387px;top:574px;width:1px;height:191px;background:#46494b;"></div>
<div style="left:741px;top:765px;width:647px;height:17px;background:#5f6366;"></div>
<div style="left:742px;top:765px;width:1px;height:16px;background:#46494b;"></div>
<div style="left:757px;top:765px;width:1px;height:16px;background:#46494b;"></div>
<div style="left:742px;top:780px;width:645px;height:1px;background:#46494b;"></div>
<svg style="left:747px;top:769px" width="6" height="10"><polygon points="5.5,0 5.5,9 0.5,4.5" fill="#f4f4f4"/></svg>
<svg style="left:825px;top:765px" width="546" height="16" shape-rendering="crispEdges"><defs><pattern id="p2" width="4" height="4" patternUnits="userSpaceOnUse" x="4" y="3"><rect x="0" y="0" width="1" height="1" fill="#c23a44"/><rect x="2" y="2" width="1" height="1" fill="#c23a44"/></pattern></defs><rect width="546" height="16" fill="#3b7dbd"/><rect x="1" y="1" width="543" height="1" fill="#b6373e"/><rect x="1" y="1" width="1" height="14" fill="#b6373e"/><rect x="4" y="3" width="540" height="10" fill="url(#p2)"/></svg>
<div style="left:1386px;top:765px;width:1px;height:16px;background:#46494b;"></div>
<svg style="left:1377px;top:769px" width="6" height="10"><polygon points="0.5,0 0.5,9 5.5,4.5" fill="#f4f4f4"/></svg>
<svg style="left:1395px;top:539px" width="151" height="26" shape-rendering="crispEdges"><polygon points="0.5,0.5 144.5,0.5 150.5,6.5 150.5,25.5 0.5,25.5" fill="#3b7dbd" stroke="#46494b" stroke-width="1"/></svg>
<div class="t" style="left:1405px;top:545px;color:#d2d7dd;">Food List</div>
<svg style="left:1395px;top:564px" width="151" height="26" shape-rendering="crispEdges"><polygon points="0.5,0.5 144.5,0.5 150.5,6.5 150.5,25.5 0.5,25.5" fill="#5f6366" stroke="#46494b" stroke-width="1"/></svg>
<div class="t" style="left:1405px;top:570px;color:#d2d7dd;">Nutrient</div>
<svg style="left:1395px;top:589px" width="151" height="26" shape-rendering="crispEdges"><polygon points="0.5,0.5 144.5,0.5 150.5,6.5 150.5,25.5 0.5,25.5" fill="#5f6366" stroke="#46494b" stroke-width="1"/></svg>
<div class="t" style="left:1405px;top:595px;color:#d2d7dd;">Nutrient Ratio</div>
<svg style="left:1395px;top:614px" width="151" height="26" shape-rendering="crispEdges"><polygon points="0.5,0.5 144.5,0.5 150.5,6.5 150.5,25.5 0.5,25.5" fill="#5f6366" stroke="#46494b" stroke-width="1"/></svg>
<div class="t" style="left:1405px;top:620px;color:#d2d7dd;">Food</div>
<svg style="left:1395px;top:639px" width="151" height="26" shape-rendering="crispEdges"><polygon points="0.5,0.5 144.5,0.5 150.5,6.5 150.5,25.5 0.5,25.5" fill="#5f6366" stroke="#46494b" stroke-width="1"/></svg>
<div class="t" style="left:1405px;top:645px;color:#d2d7dd;">Food Ratio</div>
<svg style="left:1395px;top:664px" width="151" height="26" shape-rendering="crispEdges"><polygon points="0.5,0.5 144.5,0.5 150.5,6.5 150.5,25.5 0.5,25.5" fill="#5f6366" stroke="#46494b" stroke-width="1"/></svg>
<div class="t" style="left:1405px;top:670px;color:#d2d7dd;">Group</div>
<svg style="left:1539px;top:565px" width="7" height="7"><polygon points="0,0 6,0 6,6" fill="#3b7dbd"/></svg>
<div style="left:1393px;top:538px;width:2px;height:251px;background:#3b7dbd;"></div>
<svg style="left:9px;top:798px" width="67" height="26" shape-rendering="crispEdges"><polygon points="0.5,0 0.5,19.5 6.5,25.5 66.5,25.5 66.5,0" fill="#3b7dbd" stroke="#46494b" stroke-width="1"/></svg>
<div class="t" style="left:-258px;width:600px;text-align:center;top:806px;color:#d2d7dd;">Mix</div>
<svg style="left:75px;top:798px" width="67" height="26" shape-rendering="crispEdges"><polygon points="0.5,0 0.5,19.5 6.5,25.5 66.5,25.5 66.5,0" fill="#5f6366" stroke="#46494b" stroke-width="1"/></svg>
<div class="t" style="left:-192px;width:600px;text-align:center;top:806px;color:#d2d7dd;">Meals</div>
<svg style="left:141px;top:798px" width="66" height="26" shape-rendering="crispEdges"><polygon points="0.5,0 0.5,19.5 6.5,25.5 65.5,25.5 65.5,0" fill="#5f6366" stroke="#46494b" stroke-width="1"/></svg>
<div class="t" style="left:-129px;width:600px;text-align:center;top:806px;color:#d2d7dd;">Groups</div>
<div style="left:10px;top:798px;width:65px;height:1px;background:#3b7dbd;"></div>
<svg style="left:7px;top:830px" width="137" height="26" shape-rendering="crispEdges"><polygon points="0.5,0 0.5,19.5 6.5,25.5 136.5,25.5 136.5,0" fill="#3b7dbd" stroke="#46494b" stroke-width="1"/></svg>
<div class="t" style="left:-228px;width:600px;text-align:center;top:837px;color:#d2d7dd;">Editor</div>
<svg style="left:143px;top:830px" width="137" height="26" shape-rendering="crispEdges"><polygon points="0.5,0 0.5,19.5 6.5,25.5 136.5,25.5 136.5,0" fill="#5f6366" stroke="#46494b" stroke-width="1"/></svg>
<div class="t" style="left:-89px;width:600px;text-align:center;top:837px;color:#d2d7dd;">Food List</div>
<svg style="left:279px;top:830px" width="137" height="26" shape-rendering="crispEdges"><polygon points="0.5,0 0.5,19.5 6.5,25.5 136.5,25.5 136.5,0" fill="#5f6366" stroke="#46494b" stroke-width="1"/></svg>
<div class="t" style="left:47px;width:600px;text-align:center;top:837px;color:#d2d7dd;">Food Comparison</div>
<svg style="left:415px;top:830px" width="137" height="26" shape-rendering="crispEdges"><polygon points="0.5,0 0.5,19.5 6.5,25.5 136.5,25.5 136.5,0" fill="#5f6366" stroke="#46494b" stroke-width="1"/></svg>
<div class="t" style="left:180px;width:600px;text-align:center;top:837px;color:#d2d7dd;">Mix Comparison</div>
<svg style="left:551px;top:830px" width="137" height="26" shape-rendering="crispEdges"><polygon points="0.5,0 0.5,19.5 6.5,25.5 136.5,25.5 136.5,0" fill="#5f6366" stroke="#46494b" stroke-width="1"/></svg>
<div class="t" style="left:319px;width:600px;text-align:center;top:837px;color:#d2d7dd;">Nutrient Search</div>
<svg style="left:687px;top:830px" width="137" height="26" shape-rendering="crispEdges"><polygon points="0.5,0 0.5,19.5 6.5,25.5 136.5,25.5 136.5,0" fill="#5f6366" stroke="#46494b" stroke-width="1"/></svg>
<div class="t" style="left:455px;width:600px;text-align:center;top:837px;color:#d2d7dd;">Food Category</div>
<svg style="left:823px;top:830px" width="137" height="26" shape-rendering="crispEdges"><polygon points="0.5,0 0.5,19.5 6.5,25.5 136.5,25.5 136.5,0" fill="#5f6366" stroke="#46494b" stroke-width="1"/></svg>
<div class="t" style="left:591px;width:600px;text-align:center;top:837px;color:#d2d7dd;">Food Shopping</div>
<svg style="left:959px;top:830px" width="137" height="26" shape-rendering="crispEdges"><polygon points="0.5,0 0.5,19.5 6.5,25.5 136.5,25.5 136.5,0" fill="#5f6366" stroke="#46494b" stroke-width="1"/></svg>
<div class="t" style="left:727px;width:600px;text-align:center;top:837px;color:#d2d7dd;">Mixes Log</div>
<div style="left:8px;top:830px;width:135px;height:1px;background:#3b7dbd;"></div>
</div></body></html>
